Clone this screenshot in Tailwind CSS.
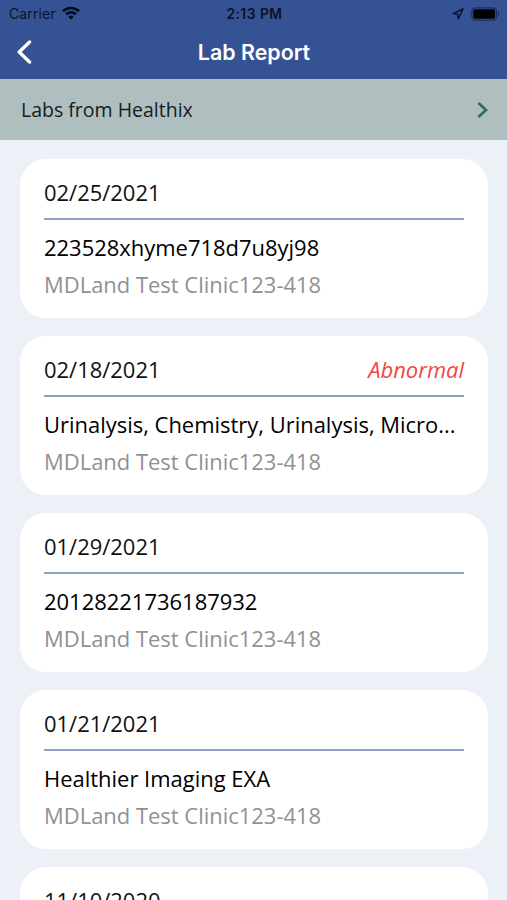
<!DOCTYPE html>
<html lang="en">
<head>
  <meta charset="UTF-8" />
  <meta name="viewport" content="width=device-width, initial-scale=1.0" />
  <title>Lab Report</title>
  <script src="https://cdn.jsdelivr.net/npm/@tailwindcss/browser@4"></script>
</head>
<body class="bg-[#ecf1f8] h-[900px] overflow-hidden font-['Open_Sans','Noto_Sans',sans-serif] text-[#111]">

  <header class="h-[79px] bg-[#355394] font-[Inter,sans-serif]">
    <!-- status bar -->
    <div class="h-7 grid grid-cols-3 items-center pl-[9px] pr-[7px] text-[#0b1226]">
      <div class="flex items-center gap-[6px] pb-[2px] text-[14px]">
        <span class="tracking-[0.1px]">Carrier</span>
        <svg class="w-[18px] h-[14px]" viewBox="0 0 18 14" fill="none" stroke="#050b18" stroke-width="2.6">
          <path d="M1 5.2a11.5 11.5 0 0 1 16 0" />
          <path d="M4 8.4a7.2 7.2 0 0 1 10 0" />
          <path d="M9 13.6 6.3 10.9a3.9 3.9 0 0 1 5.4 0z" fill="#050b18" stroke="none" />
        </svg>
      </div>
      <div class="text-center text-[13.8px] font-semibold tracking-[0.5px]">2:13 PM</div>
      <div class="flex items-center justify-end gap-[7px] pb-px">
        <svg class="w-3 h-3" viewBox="0 0 12 12" fill="none" stroke="#0b1226" stroke-width="1.4" stroke-linejoin="round">
          <path d="M11 1 1 5.6l4.7.7.6 4.7z" />
        </svg>
        <svg class="w-[29px] h-[14px]" viewBox="0 0 29 14">
          <rect x=".8" y=".8" width="24.8" height="12.4" rx="3.6" fill="none" stroke="#1c2f5c" stroke-width="1.2" />
          <rect x="2.3" y="2.3" width="21.8" height="9.4" rx="1.6" fill="#000" />
          <path d="M27 4.8c1.8.6 1.8 3.8 0 4.4z" fill="#1c2f5c" />
        </svg>
      </div>
    </div>

    <!-- nav bar -->
    <div class="h-12 grid grid-cols-3 items-center px-[17px] text-white">
      <svg class="w-4 h-6" viewBox="0 0 16 24" fill="none" stroke="currentColor" stroke-width="3.3" stroke-linecap="round" stroke-linejoin="round">
        <path d="M12.6 2 2.2 12l10.4 10" />
      </svg>
      <h1 class="pl-px pt-px text-center text-[21.4px] font-semibold whitespace-nowrap">Lab Report</h1>
    </div>
  </header>

  <a href="#" class="flex h-[61px] items-center justify-between bg-[#afbfbf] pl-[21px] pr-[19px] text-[19.5px] text-[#14201f]">
    <span>Labs from Healthix</span>
    <svg class="w-[11px] h-4" viewBox="0 0 11 16" fill="none" stroke="#35695c" stroke-width="2.7">
      <path d="M1.5 1 9 8l-7.5 7" />
    </svg>
  </a>

  <main id="reports" class="flex flex-col gap-[18px] pl-5 pr-[19px] pt-[19px]"></main>

  <script>
    const reports = [
      { date: '02/25/2021', title: '223528xhyme718d7u8yj98' },
      { date: '02/18/2021', title: 'Urinalysis, Chemistry, Urinalysis, Micro...', abnormal: true },
      { date: '01/29/2021', title: '20128221736187932' },
      { date: '01/21/2021', title: 'Healthier Imaging EXA' },
      { date: '11/10/2020', title: '' }
    ];

    document.getElementById('reports').innerHTML = reports.map(r => `
      <article class="h-[159.1px] shrink-0 rounded-[26px] bg-white px-6 pt-[19px] text-[21.96px] leading-[30px]">
        <div class="flex h-[42px] justify-between border-b-2 border-[#929fcb]">
          <span>${r.date}</span>
          ${r.abnormal ? '<span class="italic text-[#f0483f]">Abnormal</span>' : ''}
        </div>
        ${r.title ? `
          <p class="mt-[13px] truncate text-black">${r.title}</p>
          <p class="mt-[7px] text-[#919191]">MDLand Test Clinic123-418</p>
        ` : ''}
      </article>
    `).join('');
  </script>
</body>
</html>
